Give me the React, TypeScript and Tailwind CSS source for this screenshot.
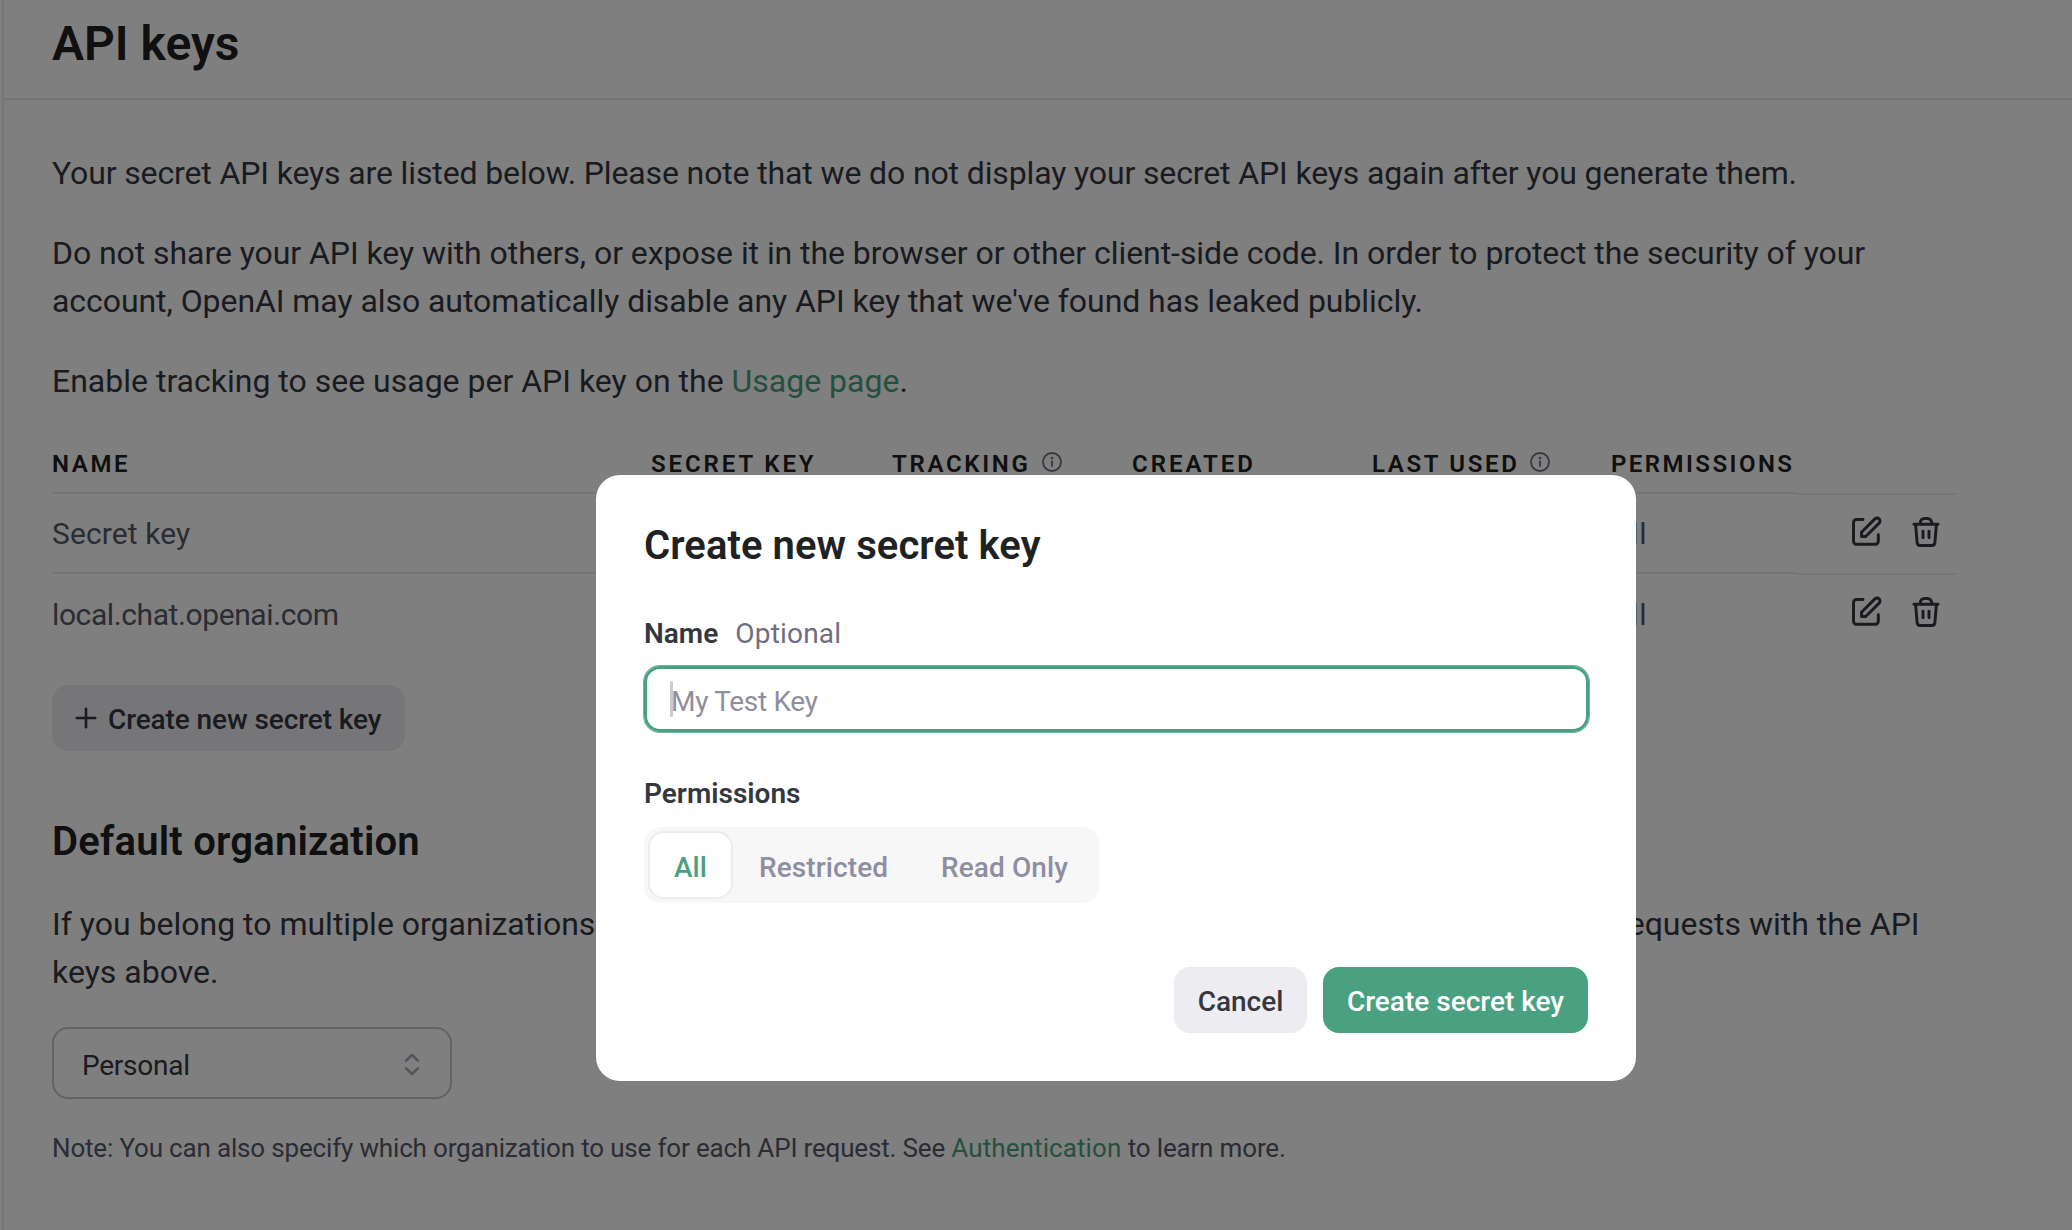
import type { ReactNode } from 'react';

const columns = [
  { label: 'NAME', width: 'w-[599px]', tracking: 'tracking-[2.6px]', info: false },
  { label: 'SECRET KEY', width: 'w-[241px]', tracking: 'tracking-[2.9px]', info: false },
  { label: 'TRACKING', width: 'w-[240px]', tracking: 'tracking-[2.7px]', info: true },
  { label: 'CREATED', width: 'w-[240px]', tracking: 'tracking-[3px]', info: false },
  { label: 'LAST USED', width: 'w-[239px]', tracking: 'tracking-[2.65px]', info: true },
  { label: 'PERMISSIONS', width: 'w-[185px]', tracking: 'tracking-[2.45px]', info: false },
];

function InfoIcon() {
  return (
    <svg className="ml-[11px] h-5 w-5 text-[#6e6e80]" viewBox="0 0 20 20" fill="none" stroke="currentColor" strokeWidth="1.8" strokeLinecap="round">
      <circle cx="10" cy="10" r="9" />
      <path d="M10 9.4v4.6" />
      <circle cx="10" cy="6.2" r="0.5" />
    </svg>
  );
}

function EditIcon() {
  return (
    <svg className="h-[34px] w-8" viewBox="0 0 32 34" fill="none" stroke="currentColor" strokeWidth="2.95" strokeLinecap="round" strokeLinejoin="round">
      <path d="M13 5.5H6.5a3 3 0 0 0-3 3v18.8a3 3 0 0 0 3 3h18.8a3 3 0 0 0 3-3v-6.5" />
      <path d="M11.5 22.5v-4.2L24.9 4.9a2.95 2.95 0 0 1 4.2 4.2L15.7 22.5z" />
    </svg>
  );
}

function TrashIcon() {
  return (
    <svg className="h-[34px] w-8" viewBox="0 0 32 34" fill="none" stroke="currentColor" strokeWidth="2.95" strokeLinecap="round" strokeLinejoin="round">
      <path d="M4 10.3h24" />
      <path d="M10.4 10V8.6a4.2 4.2 0 0 1 4.2-4.2h2.8a4.2 4.2 0 0 1 4.2 4.2V10" />
      <path d="M5.6 10.5l1.5 18.2a3 3 0 0 0 3 2.8h11.8a3 3 0 0 0 3-2.8l1.5-18.2" />
      <path d="M13 17.3v6.4M19 17.3v6.4" />
    </svg>
  );
}

function KeyRow({ name, last }: { name: string; last?: boolean }) {
  const border = last ? 'pt-[17px]' : 'border-b-2 border-[#ececf1] pt-4';
  return (
    <div className="flex h-20 text-[30px] leading-[48px] text-[#565869]">
      <div className={`h-20 w-[1559px] ${last ? 'tracking-[-0.4px]' : 'tracking-[0.1px]'} ${border}`}>{name}</div>
      <div className={`h-20 w-[185px] tracking-[0.7px] ${border}`}>All</div>
      <div className={`flex w-40 gap-7 pl-[54px] pt-5 text-[#353740] ${last ? 'h-20' : 'h-[81px] border-b-2 border-[#ececf1]'}`}>
        <EditIcon />
        <TrashIcon />
      </div>
    </div>
  );
}

function Link({ children }: { children: ReactNode }) {
  return <a className="text-[#4aa181]">{children}</a>;
}

function Modal() {
  return (
    <div className="fixed inset-0 flex items-start bg-black/50 pl-[596px] pt-[475px]">
      <div className="h-[606px] w-[1040px] rounded-3xl bg-white px-12 pt-[47px]">
        <h2 className="text-[40px] font-semibold leading-[48px] tracking-[0.07px] text-[#202123]">Create new secret key</h2>
        <div className="mt-11 flex gap-[17px] text-[28px] leading-10">
          <span className="font-semibold text-[#353740]">Name</span>
          <span className="tracking-[0.2px] text-[#6e6e80]">Optional</span>
        </div>
        <div className="-mr-px mt-3 flex h-[66px] items-center rounded-2xl border-3 border-[#4aa181] pl-[23px] ring-1 ring-[#4aa181]/80">
          <span className="h-9 w-[3px] rounded-sm bg-[#cccccc]" />
          <span className="-ml-0.5 pt-[5px] text-[28px] leading-10 tracking-[-0.3px] text-[#8e8ea0]">My Test Key</span>
        </div>
        <div className="mt-[42px] text-[28px] font-semibold leading-10 text-[#353740]">Permissions</div>
        <div className="mt-[13px] flex h-[76px] w-[455px] rounded-2xl bg-[#f7f7f8] p-1 text-[28px] font-medium leading-10 tracking-[0.1px] text-[#8e8ea0]">
          <div className="flex w-[85px] items-center justify-center rounded-2xl border-2 border-[#ececf1] bg-white pt-[5px] text-[#4aa181]">All</div>
          <div className="flex w-[182px] items-center pl-[26px] pt-[5px]">Restricted</div>
          <div className="flex items-center pl-[26px] pt-[5px]">Read Only</div>
        </div>
        <div className="mt-16 flex justify-end gap-4 text-[28px] font-medium leading-10">
          <button className="flex h-[66px] w-[133px] items-center justify-center rounded-2xl bg-[#ececf1] pt-[3px] text-[#353740]">Cancel</button>
          <button className="flex h-[66px] w-[265px] items-center justify-center rounded-2xl bg-[#4aa181] pt-[3px] text-white">Create secret key</button>
        </div>
      </div>
    </div>
  );
}

export default function App() {
  return (
    <div className="h-[1230px] overflow-hidden bg-white pl-0.5 font-['Roboto',sans-serif]">
      <div className="h-full border-l-2 border-[#ececf1]">
        <header className="h-[100px] border-b-2 border-[#ececf1] pl-12 pt-4">
          <h1 className="text-[48px] font-semibold leading-[56px] text-[#202123]">API keys</h1>
        </header>
        <main className="pl-12 pt-[49px] text-[32px] leading-[48px] text-[#353740]">
          <p className="whitespace-nowrap tracking-[-0.13px]">
            Your secret API keys are listed below. Please note that we do not display your secret API keys again after you generate them.
          </p>
          <p className="mt-8 whitespace-nowrap tracking-[-0.06px]">
            Do not share your API key with others, or expose it in the browser or other client-side code. In order to protect the security of your
            <br />
            account, OpenAI may also automatically disable any API key that we've found has leaked publicly.
          </p>
          <p className="mt-8">
            Enable tracking to see usage per API key on the <Link>Usage page</Link>.
          </p>

          <div className="mt-[43px] w-[1904px]">
            <div className="flex h-[46px]">
              {columns.map((c) => (
                <div key={c.label} className={`${c.width} ${c.tracking} flex h-[46px] border-b-2 border-[#ececf1] text-[24px] font-semibold leading-8 text-[#202123]`}>
                  {c.label}
                  {c.info && <span className="pt-1"><InfoIcon /></span>}
                </div>
              ))}
              <div className="h-[47px] w-40 border-b-2 border-[#ececf1]" />
            </div>
            <KeyRow name="Secret key" />
            <KeyRow name="local.chat.openai.com" last />
          </div>

          <button className="mt-[31px] flex h-[66px] w-[353px] items-center rounded-2xl bg-[#ececf1] pl-[23px] text-[28px] font-medium leading-10 tracking-[-0.1px] text-[#353740]">
            <svg className="mr-[11px] h-[22px] w-[22px]" viewBox="0 0 22 22" stroke="currentColor" strokeWidth="2.6" strokeLinecap="round">
              <path d="M11 1.8v18.4M1.8 11h18.4" />
            </svg>
            <span className="pt-[3px]">Create new secret key</span>
          </button>

          <h2 className="mt-[67px] text-[40px] font-semibold leading-[48px] tracking-[0.22px] text-[#202123]">Default organization</h2>
          <p className="mt-[34px] whitespace-nowrap">
            If you belong to multiple organizations,
            <span className="tracking-[-0.2px]"> this setting controls which organization is used by default when making</span>{' '}
            <span>requests with the API</span>
            <br />
            keys above.
          </p>
          <div className="mt-[31px] flex h-[72px] w-[400px] items-center justify-between rounded-2xl border-2 border-[#c5c5d2] pl-7 pr-[30px] text-[28px] leading-10 tracking-[-0.25px]">
            <span className="pt-1.5">Personal</span>
            <svg className="mt-0.5 h-7 w-4 text-[#acacbe]" viewBox="0 0 16 28" fill="none" stroke="currentColor" strokeWidth="2.8" strokeLinecap="round" strokeLinejoin="round">
              <path d="M2.2 10.6L8 5l5.8 5.6M2.2 18.4L8 24l5.8-5.6" />
            </svg>
          </div>
          <p className="mt-[29px] text-[26px] leading-10 tracking-[-0.17px] text-[#565869]">
            Note: You can also specify which organization to use for each API request. See <span className="tracking-[0.1px]"><Link>Authentication</Link></span> to learn more.
          </p>
        </main>
      </div>
      <Modal />
    </div>
  );
}
